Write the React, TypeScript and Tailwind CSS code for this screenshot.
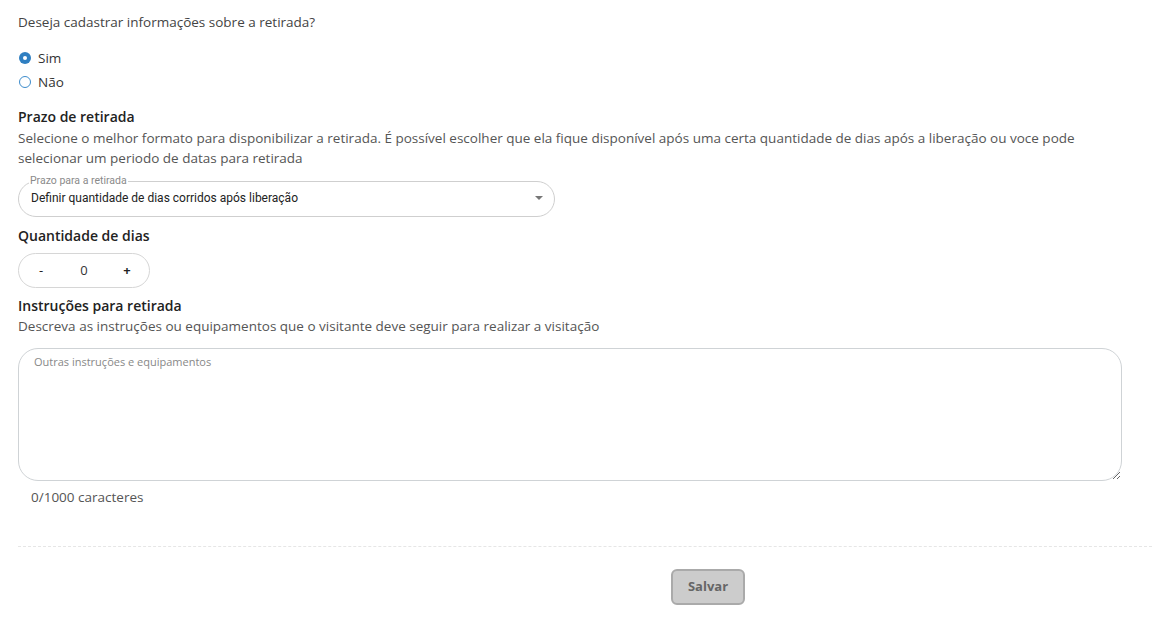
import { useState } from "react";

const font = { fontFamily: "'Open Sans', Lato, sans-serif" };

export default function App() {
  const [retirada, setRetirada] = useState("sim");
  const [dias, setDias] = useState(0);
  const [texto, setTexto] = useState("");

  return (
    <div className="min-h-screen bg-white text-[#3d3d3d]" style={font}>
      <div className="pl-[18px] pr-[4px] pt-[13px]">
        <p className="text-[13.5px] leading-[18px] text-[#444]">
          Deseja cadastrar informações sobre a retirada?
        </p>

        <div className="mt-[18px] flex flex-col gap-[6px]">
          {[
            { id: "sim", label: "Sim" },
            { id: "nao", label: "Não" },
          ].map((op) => (
            <label key={op.id} className="flex cursor-pointer items-center gap-[7px] text-[13.5px] leading-[18px] text-[#333]">
              <span
                onClick={() => setRetirada(op.id)}
                className={`ml-[1px] flex h-[12px] w-[12px] items-center justify-center rounded-full ${
                  retirada === op.id ? "bg-[#2f7fc1]" : "border border-[#3d8ccc] bg-white"
                }`}
              >
                {retirada === op.id && <span className="h-[4px] w-[4px] rounded-full bg-white" />}
              </span>
              {op.label}
            </label>
          ))}
        </div>

        <h2 className="mt-[17px] text-[14px] font-semibold leading-[18px] text-[#222]">Prazo de retirada</h2>
        <p className="mt-[2px] w-[1104px] text-[13.5px] leading-[20px] text-[#555]">
          Selecione o melhor formato para disponibilizar a retirada. É possível escolher que ela fique disponível após uma certa quantidade de dias após a liberação ou voce pode selecionar um periodo de datas para retirada
        </p>

        <fieldset
          className="mt-[7px] w-[537px] rounded-[20px] border border-[#cfcfcf] pb-[10px] pl-[12px] pr-[11px] pt-0"
          style={{ fontFamily: "Roboto, sans-serif" }}
        >
          <legend className="ml-[-2px] px-[1px] text-[10.5px] leading-[12px] text-[#8a8a8a]">Prazo para a retirada</legend>
          <div className="flex items-center justify-between pt-[3px]">
            <span className="text-[12px] leading-[16px] text-[#222]">
              Definir quantidade de dias corridos após liberação
            </span>
            <svg width="8" height="4" viewBox="0 0 8 4">
              <path d="M0 0 L8 0 L4 4 Z" fill="#777" />
            </svg>
          </div>
        </fieldset>

        <h2 className="mt-[10px] text-[14px] font-semibold leading-[18px] text-[#222]">Quantidade de dias</h2>
        <div className="mt-[8px] flex h-[35px] w-[132px] items-center justify-between rounded-full border border-[#d6d6d6] px-[18px] text-[13px] text-[#222]">
          <button onClick={() => setDias(Math.max(0, dias - 1))} className="w-[8px]">-</button>
          <span className="text-[#333]">{dias}</span>
          <button onClick={() => setDias(dias + 1)} className="w-[8px] font-bold">+</button>
        </div>

        <h2 className="mt-[9px] text-[14px] font-semibold leading-[18px] text-[#222]">Instruções para retirada</h2>
        <p className="mt-[2px] text-[13.5px] leading-[18px] text-[#555]">
          Descreva as instruções ou equipamentos que o visitante deve seguir para realizar a visitação
        </p>

        <textarea
          value={texto}
          onChange={(e) => setTexto(e.target.value)}
          placeholder="Outras instruções e equipamentos"
          className="mt-[13px] block h-[133px] w-[1104px] resize-y rounded-[20px] border border-[#cfd3d6] px-[15px] pt-[5px] text-[11px] leading-[16px] text-[#333] outline-none placeholder:text-[#888]"
        />
        <p className="mt-[7px] pl-[13px] text-[13.5px] leading-[18px] text-[#555]">{texto.length}/1000 caracteres</p>

        <div className="mt-[40px] border-t border-dashed border-[#e6e6e6]" />

        <div className="mt-[22px] flex justify-center pl-[246px]">
          <button className="h-[36px] w-[74px] rounded-[6px] border-2 border-[#aaaaaa] bg-[#cccccc] text-[13px] font-bold text-[#666]">
            Salvar
          </button>
        </div>
      </div>
    </div>
  );
}
